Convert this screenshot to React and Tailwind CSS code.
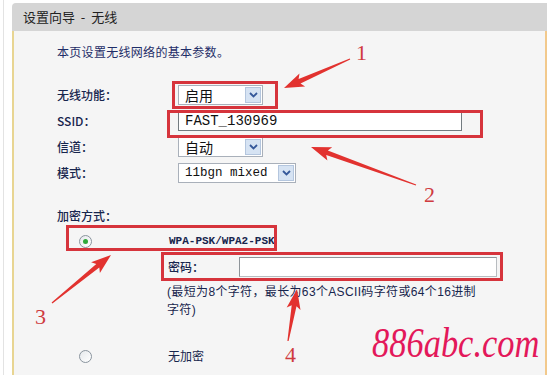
import React from 'react'

const CJK = { fontFamily: '"Noto Sans CJK SC", "Liberation Sans", sans-serif' }

// tapered red annotation arrow, tail -> tip
function arrowPoints([x1, y1], [x2, y2]) {
  const dx = x2 - x1, dy = y2 - y1
  const len = Math.hypot(dx, dy)
  const ux = dx / len, uy = dy / len
  const nx = -uy, ny = ux
  const H = 17, W = 7
  const bx = x2 - ux * H, by = y2 - uy * H
  const p = (x, y) => `${x.toFixed(1)},${y.toFixed(1)}`
  return [
    p(x1 + nx * 0.6, y1 + ny * 0.6),
    p(bx + nx * 2.4, by + ny * 2.4),
    p(bx - ux * 3 + nx * W, by - uy * 3 + ny * W),
    p(x2, y2),
    p(bx - ux * 3 - nx * W, by - uy * 3 - ny * W),
    p(bx - nx * 2.4, by - ny * 2.4),
    p(x1 - nx * 0.6, y1 - ny * 0.6),
  ].join(' ')
}

const ARROWS = [
  { tail: [350, 59], tip: [284, 88] },
  { tail: [416, 185], tip: [311, 147] },
  { tail: [52, 303], tip: [111, 255] },
  { tail: [288, 341], tip: [297, 289] },
]

const NUMS = [
  { n: '1', cls: 'left-[356px] top-[42px]' },
  { n: '2', cls: 'left-[424px] top-[184px]' },
  { n: '3', cls: 'left-[35px] top-[306px]' },
  { n: '4', cls: 'left-[285px] top-[344px]' },
]

function Select({ value, w, mono }) {
  return (
    <div className={`${w} h-[20px] bg-white border border-[#a9b0ba] flex items-center justify-between pl-[6px] pr-[1px]`}>
      <span className={mono ? 'text-[12.5px] text-[#111]' : 'text-[14px] text-[#111]'}
        style={mono ? { fontFamily: '"Liberation Mono", monospace' } : CJK}>{value}</span>
      <span className="w-[16px] h-[16px] bg-[#d6e3f3] border border-[#b4c6de] flex items-center justify-center">
        <svg width="9" height="6" viewBox="0 0 9 6"><path d="M1 1 L4.5 4.5 L8 1" fill="none" stroke="#35589a" strokeWidth="1.8" /></svg>
      </span>
    </div>
  )
}

function Radio({ checked }) {
  return (
    <span className="w-[13px] h-[13px] rounded-full border border-[#8a949e] bg-gradient-to-br from-[#e6e9ec] to-white flex items-center justify-center">
      {checked && <span className="w-[5px] h-[5px] rounded-full bg-[#2fa83a]" />}
    </span>
  )
}

function Row({ label, children }) {
  return (
    <div className="h-[26px] flex items-center">
      <span className="w-[121px] text-[12px] font-medium text-[#17254d]">{label}</span>
      {children}
    </div>
  )
}

export default function App() {
  return (
    <div className="relative w-[547px] h-[375px] overflow-hidden bg-white pl-[3px]" style={CJK}>
      <div className="h-full flex flex-col border-l border-[#e3e3e3] pl-[8px]">
        {/* header */}
        <div className="mt-[3px] h-[28px] bg-[#d5d5d5] rounded-tl-[4px] pl-[11px] flex items-center text-[13px] text-[#222] whitespace-pre">
          设置向导  -  无线
        </div>

        {/* body */}
        <div className="flex-1 bg-[#f5f5f5] border-l-2 border-l-[#e8d592] border-r-2 border-r-[#f2c98c] pl-[43px] pt-[13px]">
          <div className="h-[16px] leading-[16px] text-[12px] text-[#1f2e68] tracking-[0.3px]">本页设置无线网络的基本参数。</div>

          <div className="mt-[22px]">
            <Row label="无线功能："><Select value="启用" w="w-[85px]" /></Row>
            <Row label="SSID：">
              <div className="w-[284px] h-[19px] bg-white border border-[#737b80] pl-[6px] flex items-center text-[14px] text-[#111]"
                style={{ fontFamily: '"Liberation Mono", monospace' }}>FAST_130969</div>
            </Row>
            <Row label="信道："><Select value="自动" w="w-[85px]" /></Row>
            <Row label="模式："><Select value="11bgn mixed" w="w-[118px]" mono /></Row>
          </div>

          <div className="mt-[22px] h-[16px] leading-[16px] text-[12px] font-medium text-[#17254d]">加密方式：</div>

          <div className="mt-[7px] h-[20px] flex items-center">
            <span className="ml-[22px]"><Radio checked /></span>
            <span className="ml-[77px] text-[11px] font-bold text-[#17254d]" style={{ fontFamily: '"Liberation Mono", monospace' }}>WPA-PSK/WPA2-PSK</span>
          </div>

          <div className="mt-[4px] h-[24px] flex items-center pl-[111px]">
            <span className="w-[71px] text-[12px] font-medium text-[#17254d]">密码：</span>
            <div className="w-[258px] h-[20px] bg-white border border-[#b8bcc0] border-t-[#8e9499] border-l-[#8e9499]" />
          </div>

          <div className="mt-[4px] pl-[110px] text-[12px] leading-[18px] tracking-[0.35px] text-[#17254d]"
            style={{ fontFamily: '"Liberation Sans", "Noto Sans CJK SC", sans-serif' }}>
            (最短为8个字符，最长为63个ASCII码字符或64个16进制<br />字符)
          </div>

          <div className="mt-[27px] h-[20px] flex items-center">
            <span className="ml-[22px]"><Radio /></span>
            <span className="ml-[76px] text-[12px] text-[#17254d]">无加密</span>
          </div>
        </div>
      </div>

      {/* red annotation boxes */}
      <div className="absolute left-[172px] top-[81px] w-[106px] h-[28px] border-[3px] border-[#d6343c]" />
      <div className="absolute left-[167px] top-[110px] w-[316px] h-[28px] border-[3px] border-[#d6343c]" />
      <div className="absolute left-[66px] top-[225px] w-[211px] h-[26px] border-[3px] border-[#d6343c]" />
      <div className="absolute left-[161px] top-[252px] w-[342px] h-[29px] border-[3px] border-[#d6343c]" />

      <svg className="absolute inset-0 pointer-events-none" width="547" height="375">
        {ARROWS.map((a, i) => <polygon key={i} points={arrowPoints(a.tail, a.tip)} fill="#e2322f" />)}
      </svg>

      {NUMS.map(({ n, cls }) => (
        <span key={n} className={`absolute ${cls} text-[22px] leading-[22px] text-[#cf3b3f]`}
          style={{ fontFamily: '"Liberation Serif", serif' }}>{n}</span>
      ))}

      <span className="absolute left-[372px] top-[318px] origin-left scale-x-[0.82] text-[42px] leading-[50px] italic text-[#e3185a]"
        style={{ fontFamily: '"Liberation Serif", serif' }}>886abc.com</span>
    </div>
  )
}
